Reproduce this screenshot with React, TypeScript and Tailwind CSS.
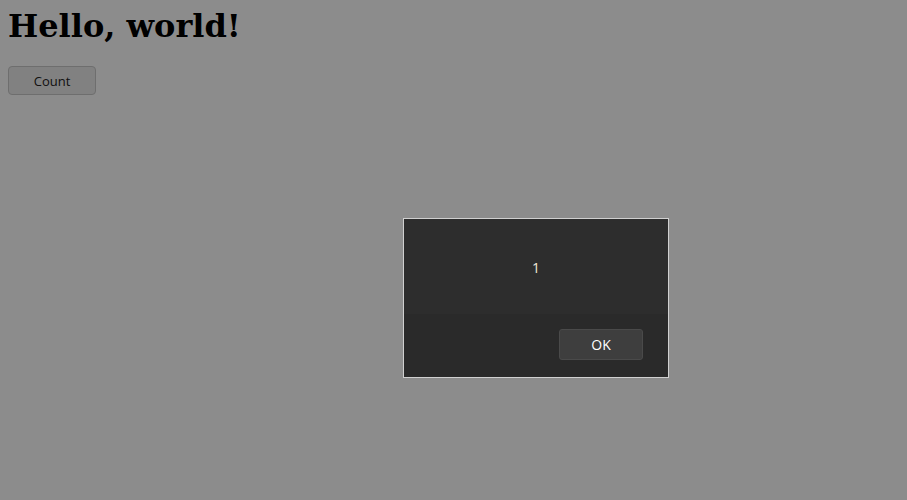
export default function App() {
  return (
    <div className="relative h-[500px] w-[907px] overflow-hidden bg-white p-2">
      <h1 className="text-[32px] leading-[37px] font-bold text-black [font-family:'DejaVu_Serif',serif]">
        Hello, world!
      </h1>
      <button className="mt-[21px] h-[29px] w-[88px] rounded-[4px] border border-[#c8c8c8] bg-[#ebebeb] pt-[2px] text-[13px] text-[#222] [font-family:'Open_Sans',sans-serif]">
        Count
      </button>

      {/* alert overlay */}
      <div className="absolute inset-0 bg-black/[0.45]">
        <div className="absolute left-[403px] top-[218px] flex h-[160px] w-[266px] flex-col border border-[#d0d0d0] bg-[#2a2a2a] [font-family:'Open_Sans',sans-serif]">
          <div className="flex h-[95px] items-center justify-center bg-[#2d2d2d] pt-[1px] text-[14px] text-[#f0e8d8]">
            1
          </div>
          <div className="flex flex-1 items-start justify-end pt-[15px] pr-[25px]">
            <button className="h-[31px] w-[84px] rounded-[3px] border border-[#4a4a4a] bg-[#3e3e3e] text-[14px] text-white">
              OK
            </button>
          </div>
        </div>
      </div>
    </div>
  );
}
